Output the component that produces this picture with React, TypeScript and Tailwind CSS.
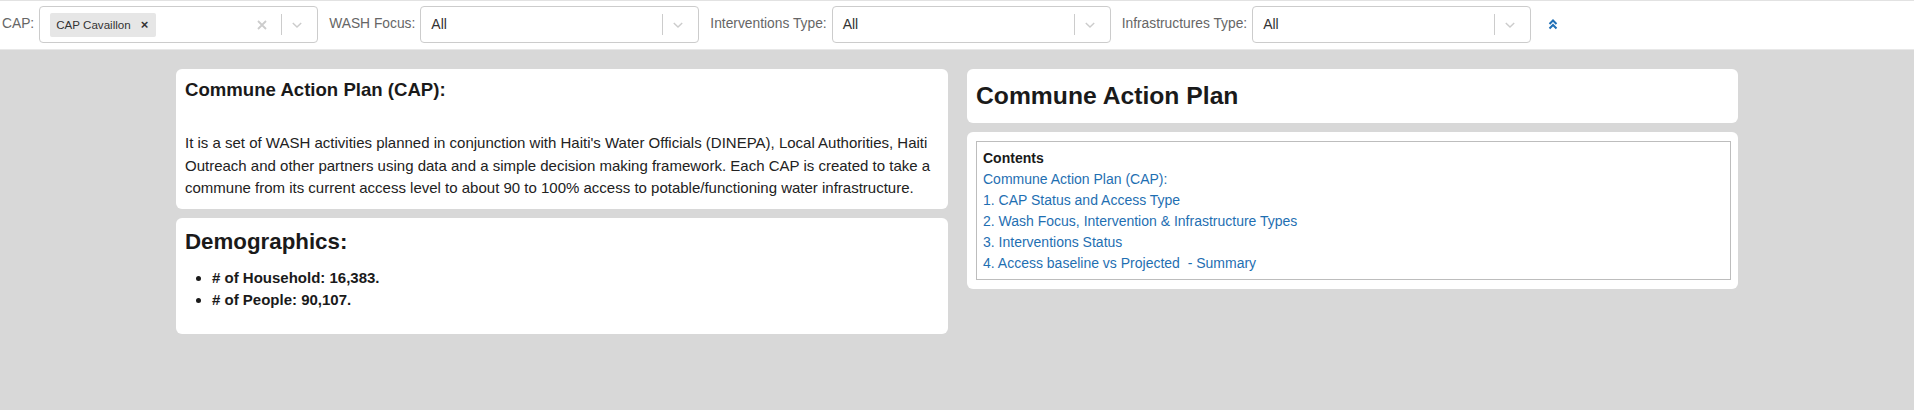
import React from "react";

const Chevron = () => (
  <svg width="14" height="14" viewBox="0 0 20 20" className="block">
    <path d="M4 7 L10 13 L16 7" fill="none" stroke="#cccccc" strokeWidth="2" />
  </svg>
);

const ClearX = () => (
  <svg width="12" height="12" viewBox="0 0 12 12" className="block">
    <path d="M2 2 L10 10 M10 2 L2 10" fill="none" stroke="#cccccc" strokeWidth="1.8" />
  </svg>
);

function Select({ value, chip }: { value?: string; chip?: string }) {
  return (
    <div className="flex h-[37px] w-[279px] shrink-0 items-center rounded-[4px] border border-[#cccccc] bg-white">
      <div className="flex flex-1 items-center pl-[10px]">
        {chip ? (
          <div className="flex h-[24px] items-center rounded-[2px] bg-[#e6e6e6] pl-[6px] pr-[8px] text-[11.6px] text-[#333]">
            <span>{chip}</span>
            <span className="ml-[10px] text-[13px] font-bold leading-none">×</span>
          </div>
        ) : (
          <span className="text-[14px] text-[#333]">{value}</span>
        )}
      </div>
      {chip && (
        <div className="flex w-[38px] justify-center">
          <ClearX />
        </div>
      )}
      <div className="h-[21px] w-px bg-[#cccccc]" />
      <div className="mr-[5px] flex w-[30px] justify-center">
        <Chevron />
      </div>
    </div>
  );
}

function Label({ children }: { children: React.ReactNode }) {
  return <span className="mr-[5px] whitespace-nowrap text-[13.8px] text-[#666]">{children}</span>;
}

export default function App() {
  return (
    <div
      className="min-h-screen bg-[#d8d8d8]"
      style={{ fontFamily: '"Liberation Sans", Arial, sans-serif' }}
    >
      <div className="flex h-[50px] items-center border-t border-b border-t-[#e2e2e2] border-b-[#e8e8e8] bg-white pl-[2px] pb-[1px]">
        <Label>CAP:</Label>
        <Select chip="CAP Cavaillon" />
        <div className="w-[11px]" />
        <Label>WASH Focus:</Label>
        <Select value="All" />
        <div className="w-[11px]" />
        <Label>Interventions Type:</Label>
        <Select value="All" />
        <div className="w-[11px]" />
        <Label>Infrastructures Type:</Label>
        <Select value="All" />
        <div className="ml-[17px] text-[#1f6fb5]">
          <svg width="10" height="11" viewBox="0 0 10 11" className="block">
            <path d="M1.5 5 L5 1.5 L8.5 5 M1.5 9.5 L5 6 L8.5 9.5" fill="none" stroke="currentColor" strokeWidth="2" />
          </svg>
        </div>
      </div>

      <div className="mx-auto grid w-[1562px] grid-cols-[772px_771px] gap-x-[19px] pt-[19px]">
        <div className="flex flex-col gap-[9px]">
          <div className="rounded-[6px] bg-white p-[9px]">
            <h4 className="text-[18.6px] font-bold leading-[24px] text-[#1a1a1a]">Commune Action Plan (CAP):</h4>
            <p className="mt-[30px] text-[15px] leading-[22.5px] text-[#222]">
              It is a set of WASH activities planned in conjunction with Haiti's Water Officials (DINEPA), Local Authorities, Haiti Outreach and other partners using data and a simple decision making framework. Each CAP is created to take a commune from its current access level to about 90 to 100% access to potable/functioning water infrastructure.
            </p>
          </div>
          <div className="rounded-[6px] bg-white px-[9px] pt-[9px] pb-[23px]">
            <h3 className="text-[22.3px] font-bold leading-[30px] text-[#1a1a1a]">Demographics:</h3>
            <ul className="mt-[10px] list-disc pl-[27px] text-[15px] font-bold leading-[22px] text-[#1a1a1a]">
              <li># of Household: 16,383.</li>
              <li># of People: 90,107.</li>
            </ul>
          </div>
        </div>

        <div className="flex flex-col gap-[9px]">
          <div className="rounded-[6px] bg-white p-[9px]">
            <h2 className="text-[24.7px] font-bold leading-[36px] text-[#1a1a1a]">Commune Action Plan</h2>
          </div>
          <div className="rounded-[6px] bg-white py-[9px] pl-[9px] pr-[7px]">
            <div className="border border-[#bdbdbd] px-[6px] pt-[6px] pb-[5px] text-[14px] leading-[21px]">
              <div className="font-bold text-[#1a1a1a]">Contents</div>
              <div className="text-[#1f6fb2]">Commune Action Plan (CAP):</div>
              <div className="text-[#1f6fb2]">1. CAP Status and Access Type</div>
              <div className="text-[#1f6fb2]">2. Wash Focus, Intervention &amp; Infrastructure Types</div>
              <div className="text-[#1f6fb2]">3. Interventions Status</div>
              <div className="whitespace-pre text-[#1f6fb2]">4. Access baseline vs Projected  - Summary</div>
            </div>
          </div>
        </div>
      </div>
    </div>
  );
}
